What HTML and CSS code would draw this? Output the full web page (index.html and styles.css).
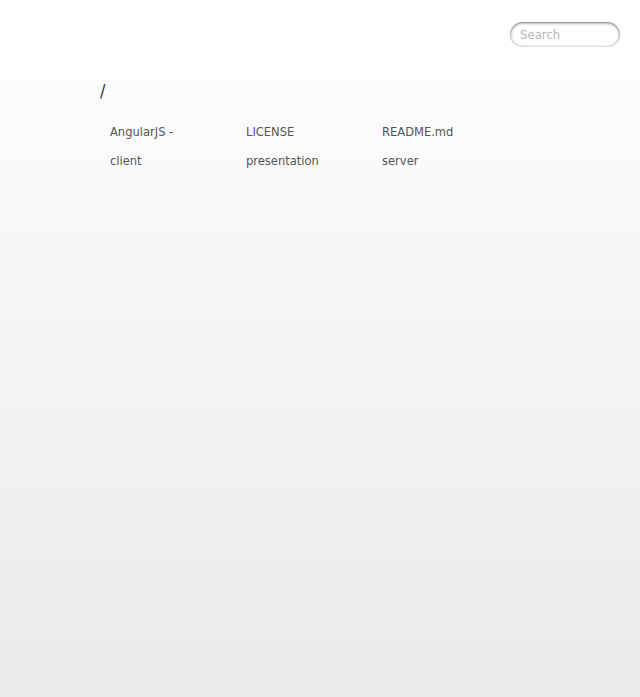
FILE: index.html
```html
<!DOCTYPE html>
<html>
<head>
<meta charset="utf-8">
<title>listing directory /</title>
<link rel="stylesheet" href="styles.css">
</head>
<body class="directory">
  <div class="topbar">
    <input class="search" type="text" placeholder="Search" autocomplete="off">
  </div>
  <div class="wrapper">
    <h1 class="crumb"><a href="/">/</a></h1>
    <ul class="files">
      <li><a href="#">AngularJS -</a></li>
      <li><a href="#">LICENSE</a></li>
      <li><a href="#">README.md</a></li>
      <li><a href="#">client</a></li>
      <li><a href="#">presentation</a></li>
      <li><a href="#">server</a></li>
    </ul>
  </div>
</body>
</html>
```

FILE: styles.css
```css
* {
  margin: 0;
  padding: 0;
  box-sizing: border-box;
}

html {
  height: 100%;
}

body {
  min-height: 100%;
  padding: 22px 20px 0 100px;
  font: 12.8px "DejaVu Sans Condensed", "DejaVu Sans", sans-serif;
  color: #555;
  background: #ECE9E9 linear-gradient(to bottom, #ffffff, #ECE9E9) no-repeat;
  background-attachment: fixed;
  display: flex;
  flex-direction: column;
}

a {
  color: #555;
  text-decoration: none;
}

.topbar {
  display: flex;
  justify-content: flex-end;
  height: 58px;
}

.search {
  width: 110px;
  height: 25px;
  padding: 4px 10px;
  border: none;
  border-radius: 32px;
  background: transparent;
  box-shadow: inset 0 0 3px rgba(0, 0, 0, 0.25), inset 0 1px 3px rgba(0, 0, 0, 0.7);
  font: 13px "DejaVu Sans Condensed", "DejaVu Sans", sans-serif;
  color: #888;
  opacity: 0.7;
  outline: none;
}

.search::placeholder {
  color: #999;
}

.crumb {
  font-size: 18px;
  font-weight: normal;
  line-height: 21px;
  margin-bottom: 16px;
}

.crumb a {
  color: #343434;
}

.files {
  list-style: none;
  display: grid;
  grid-template-columns: repeat(3, 136px);
  grid-auto-rows: 29px;
}

.files li {
  padding: 2px 0 2px 10px;
  line-height: 25px;
  white-space: nowrap;
}
```
